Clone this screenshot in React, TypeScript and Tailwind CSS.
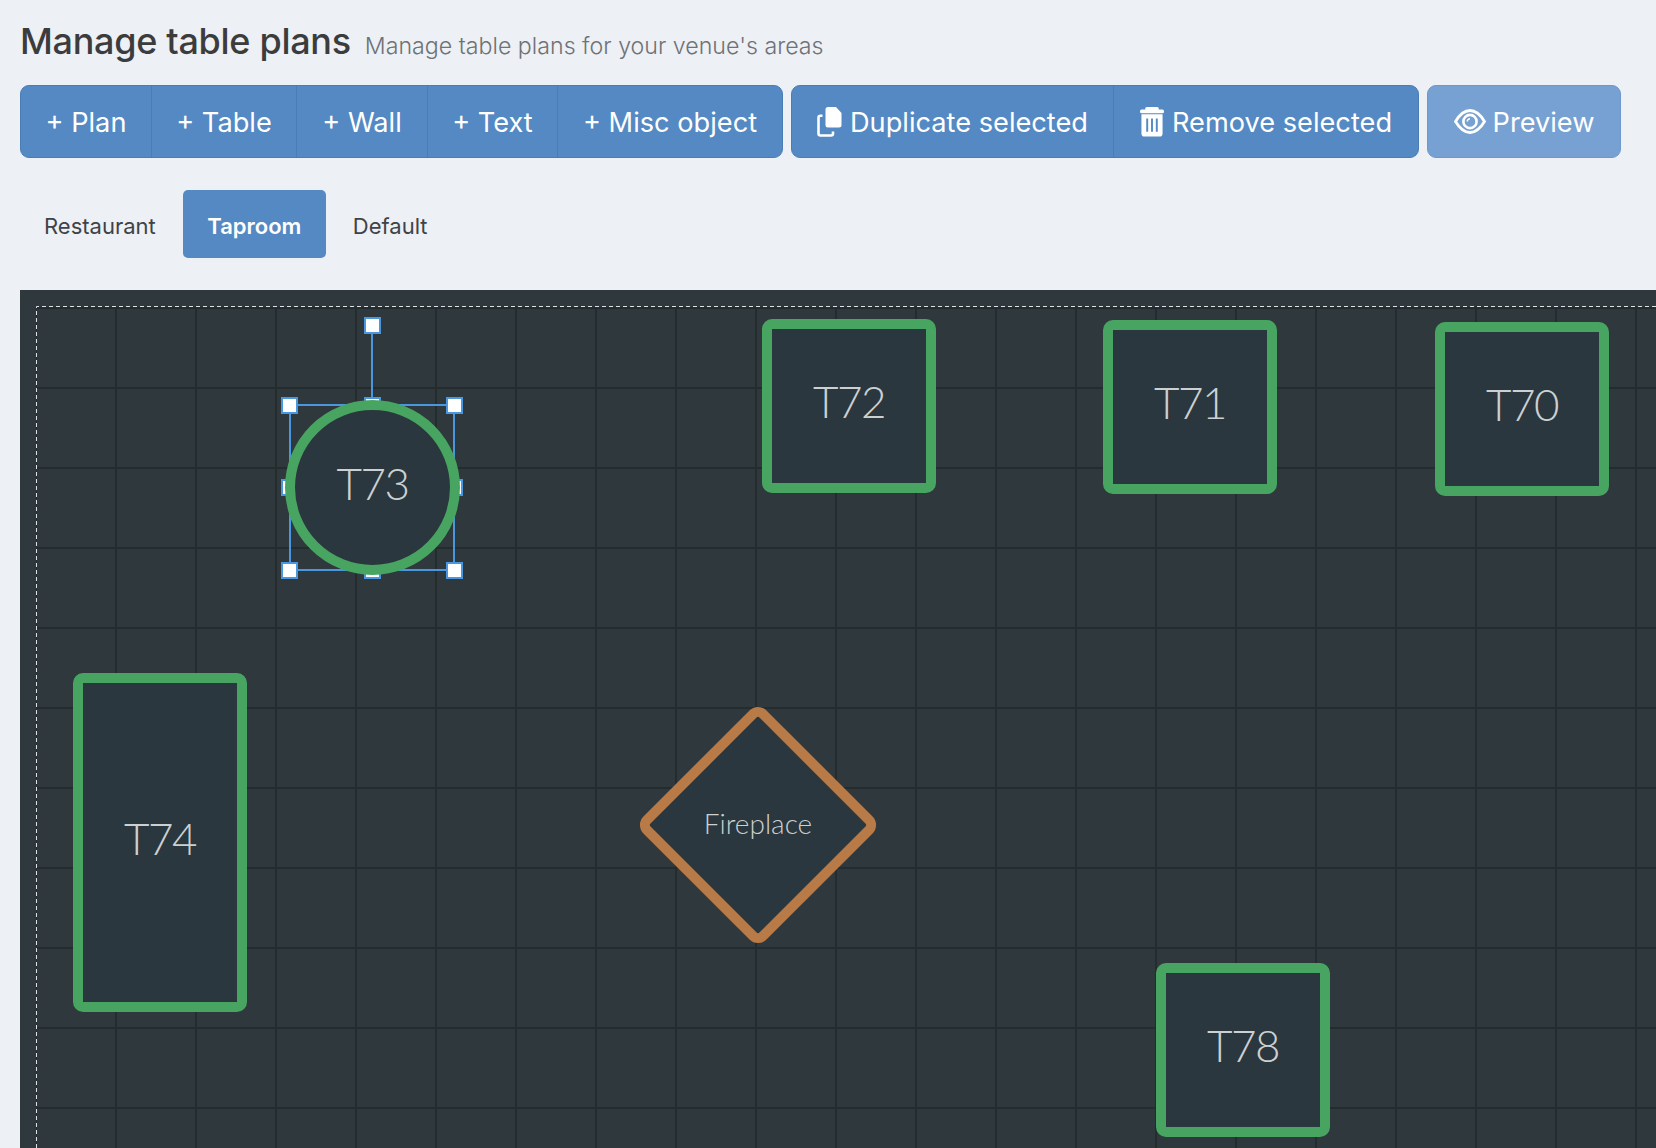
import React from "react";

const btn = "flex h-full items-center justify-center text-[27.2px] text-white border-r border-[#4a7db6] last:border-r-0";
const tableBase = "absolute flex items-center justify-center border-[10px] border-[#48a461] bg-[#2a373e] text-[#cdd0d1] font-light text-[44px] tracking-[-1.5px] pb-[10px]";

function Handle({ className }: { className: string }) {
  return <div className={"absolute h-[17px] w-[17px] border-2 border-[#4a97de] bg-white " + className} />;
}

function CopyIcon() {
  return (
    <svg width="25" height="30" viewBox="0 0 25 30" className="mt-[1px] shrink-0">
      <path d="M5.5 8.7H3.5a2 2 0 0 0-2 2V26.5a2 2 0 0 0 2 2H14a2 2 0 0 0 2-2V24.5" stroke="#fff" strokeWidth="2.6" fill="none" />
      <path d="M11 0H19L24.5 6V18a2.5 2.5 0 0 1-2.5 2.5H11a2.5 2.5 0 0 1-2.5-2.5V2.5A2.5 2.5 0 0 1 11 0Z" fill="#fff" />
    </svg>
  );
}

function TrashIcon() {
  return (
    <svg width="24" height="30" viewBox="0 0 25 29" preserveAspectRatio="none" className="shrink-0">
      <path d="M7 0h11a1.5 1.5 0 0 1 1.5 1.5V3H5.500V1.500A1.500 1.500 0 0 1 7 0Z" fill="#fff" />
      <rect x="0" y="2.500" width="25" height="3.500" rx="1.500" fill="#fff" />
      <path
        fillRule="evenodd"
        fill="#fff"
        d="M1.500 7H23.500V25.500a3 3 0 0 1-3 3H4.500a3 3 0 0 1-3-3ZM6.500 11V24H8.500V11ZM11.500 11V24H13.500V11ZM16.500 11V24H18.500V11Z"
      />
    </svg>
  );
}

function EyeIcon() {
  return (
    <svg width="32" height="25" viewBox="0 0 32 25" fill="none" stroke="#fff" className="mb-[1px] shrink-0">
      <path d="M1.500 12.500C6 5 11 1.500 16 1.500S26 5 30.500 12.500C26 20 21 23.500 16 23.500S6 20 1.500 12.500Z" strokeWidth="2.800" />
      <circle cx="16" cy="12.500" r="6.600" strokeWidth="2.600" />
      <path d="M13.300 12.500a2.700 2.700 0 0 1 2.700-2.700" strokeWidth="1.500" />
    </svg>
  );
}

function Label({ children }: { children: React.ReactNode }) {
  return <span className="pt-[3px]">{children}</span>;
}

export default function App() {
  return (
    <div className="h-[1148px] w-[1656px] overflow-hidden bg-[#edf0f5] font-['Inter',sans-serif]">
      <div className="flex h-[85px] items-baseline gap-[14px] pl-5 pt-[14px]">
        <h1 className="text-[36px] font-medium leading-[54px] tracking-[-0.3px] text-[#3c3c3c]">Manage table plans</h1>
        <span className="text-[23.200px] font-light text-[#6f7276]">Manage table plans for your venue's areas</span>
      </div>

      <div className="flex h-[73px] gap-2 pl-5">
        <div className="flex overflow-hidden rounded-[9px] border border-[#4a7db6] bg-[#5489c3]">
          <div className={btn + " w-[131px]"}><Label>+ Plan</Label></div>
          <div className={btn + " w-[145px]"}><Label>+ Table</Label></div>
          <div className={btn + " w-[131px]"}><Label>+ Wall</Label></div>
          <div className={btn + " w-[130px]"}><Label>+ Text</Label></div>
          <div className={btn + " w-[224px]"}><Label>+ Misc object</Label></div>
        </div>
        <div className="flex overflow-hidden rounded-[9px] border border-[#4a7db6] bg-[#5489c3]">
          <div className={btn + " w-[322px] gap-2"}>
            <CopyIcon />
            <Label>Duplicate selected</Label>
          </div>
          <div className={btn + " w-[304px] gap-2"}>
            <TrashIcon />
            <Label>Remove selected</Label>
          </div>
        </div>
        <div className="flex w-[194px] items-center justify-center gap-[7px] rounded-[9px] border border-[#6b99cd] bg-[#76a1d2] text-[27.200px] text-white">
          <EyeIcon />
          <Label>Preview</Label>
        </div>
      </div>

      <div className="flex h-[132px] items-start pl-5 pt-8 text-[22px]">
        <div className="flex h-[68px] items-center pb-0 pl-6 pr-[27px] pt-1 text-[#3f4347]">Restaurant</div>
        <div className="flex h-[68px] w-[143px] items-center justify-center rounded-[5px] bg-[#5489c3] pt-1 font-semibold text-white">Taproom</div>
        <div className="flex h-[68px] items-center pl-[27px] pr-7 pt-1 text-[#3f4347]">Default</div>
      </div>

      <div className="relative ml-5 h-[858px] w-[1636px] overflow-hidden bg-[#2f383d] font-['Lato',sans-serif]">
        <svg className="absolute left-[16px] top-[16px]" width="1620" height="842">
          <defs>
            <pattern id="g" x="40" y="42" width="80" height="80" patternUnits="userSpaceOnUse">
              <path d="M40 0V80M0 40H80" stroke="#252c2e" strokeWidth="2" fill="none" />
            </pattern>
          </defs>
          <rect x="0" y="0" width="1620" height="842" fill="url(#g)" />
          <path d="M0.5 842V0.5H1620" stroke="#dfe2e4" strokeWidth="1" strokeDasharray="4 3" fill="none" />
        </svg>

        <div className="absolute left-[351px] top-[43px] h-[70px] w-[2px] bg-[#4a97de]" />
        <div className="absolute left-[269px] top-[114px] h-[167px] w-[166px] border-2 border-[#4a97de]" />
        <Handle className="left-[344px] top-[27px]" />
        <Handle className="left-[261px] top-[107px]" />
        <Handle className="left-[344px] top-[107px]" />
        <Handle className="left-[426px] top-[107px]" />
        <Handle className="left-[261px] top-[189px]" />
        <Handle className="left-[426px] top-[189px]" />
        <Handle className="left-[261px] top-[272px]" />
        <Handle className="left-[344px] top-[272px]" />
        <Handle className="left-[426px] top-[272px]" />

        <div className={tableBase + " left-[265px] top-[110px] h-[175px] w-[175px] rounded-full"}>T73</div>
        <div className={tableBase + " left-[742px] top-[29px] h-[174px] w-[174px] rounded-[10px]"}>T72</div>
        <div className={tableBase + " left-[1083px] top-[30px] h-[174px] w-[174px] rounded-[10px]"}>T71</div>
        <div className={tableBase + " left-[1415px] top-[32px] h-[174px] w-[174px] rounded-[10px]"}>T70</div>
        <div className={tableBase + " left-[53px] top-[383px] h-[339px] w-[174px] rounded-[10px]"}>T74</div>
        <div className={tableBase + " left-[1136px] top-[673px] h-[174px] w-[174px] rounded-[10px]"}>T78</div>

        <div className="absolute left-[651px] top-[448px] h-[174px] w-[174px] rotate-45 rounded-[12px] border-[10px] border-[#b87a46] bg-[#2a373e]" />
        <div className="absolute left-[651px] top-[448px] flex h-[174px] w-[174px] items-center justify-center pb-[5px] text-[28px] font-light text-[#cdd0d1]">Fireplace</div>
      </div>
    </div>
  );
}
